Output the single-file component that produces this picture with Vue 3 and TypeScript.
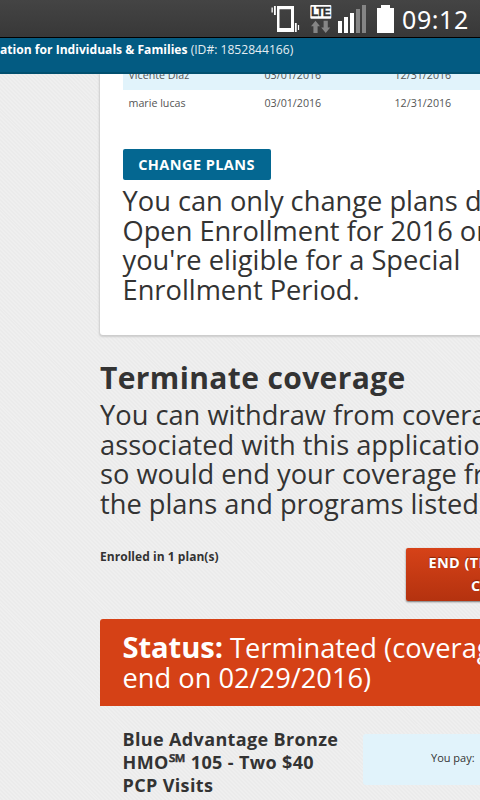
<script setup lang="ts">
interface Member {
  name: string
  start: string
  end: string
}

const members: Member[] = [
  { name: 'Vicente Diaz', start: '03/01/2016', end: '12/31/2016' },
  { name: 'marie lucas', start: '03/01/2016', end: '12/31/2016' },
]

const changeLines: string[] = [
  'You can only change plans during',
  'Open Enrollment for 2016 or if',
  "you're eligible for a Special",
  'Enrollment Period.',
]

const terminateLines: string[] = [
  'You can withdraw from coverage',
  'associated with this application',
  'so would end your coverage from',
  'the plans and programs listed',
]
</script>

<template>
  <div class="screen">
    <header class="phone-bar">
      <svg class="status-icons" width="131" height="37" viewBox="0 0 131 37">
        <g fill="#fff">
          <path d="M6 6h17v26H6zM8.5 9.3V28H20V9.3z" fill-rule="evenodd" />
          <path d="M3 6h1.8v9H3zM.5 7.5h1.3v5H.5zM23.9 23h1.8v9h-1.8zM26.9 25h1.2v5h-1.2z" />
          <rect x="39.3" y="5" width="21" height="13.7" rx="1" />
          <path d="M67 21h4v12h-4zM73 17h4v16h-4zM79 13h4v20h-4z" />
          <path d="M110 5h9v3h4v25h-17V8h4z" />
        </g>
        <path d="M85 9h4v24h-4zM91 5h4v28h-4z" fill="#858585" />
        <path d="M44.5 20.7l4.5 5.6h-2.4V33h-4.2v-6.7H40zM54.7 33l-4.5-5.6h2.4v-6.7h4.2v6.7h2.4z" fill="#858585" />
        <text x="49.3" y="16.2" text-anchor="middle" class="lte">LTE</text>
      </svg>
      <span class="clock">09:12</span>
    </header>

    <div class="app-bar">
      <span class="app-title"><b>ation for Individuals &amp; Families</b> (ID#: 1852844166)</span>
    </div>

    <main class="page">
      <section class="card">
        <div class="members">
          <div v-for="m in members" :key="m.name" class="member">
            <span>{{ m.name }}</span><span>{{ m.start }}</span><span>{{ m.end }}</span>
          </div>
        </div>
        <button class="change">CHANGE PLANS</button>
        <p class="copy">
          <span v-for="l in changeLines" :key="l">{{ l }}</span>
        </p>
      </section>

      <h2>Terminate coverage</h2>
      <p class="copy">
        <span v-for="l in terminateLines" :key="l">{{ l }}</span>
      </p>

      <div class="enrolled">
        <b>Enrolled in 1 plan(s)</b>
        <button class="end"><span>END (TERMINATE) ALL</span><span>COVERAGE</span></button>
      </div>

      <section class="plan">
        <div class="status">
          <div class="status-line"><b>Status:</b> Terminated (coverage will</div>
          <div class="status-line">end on 02/29/2016)</div>
        </div>
        <div class="plan-body">
          <h3>
            <span>Blue Advantage Bronze</span>
            <span>HMO<i class="mark">℠</i> 105 - Two $40</span>
            <span>PCP Visits</span>
          </h3>
          <div class="pay">You pay:</div>
        </div>
      </section>
    </main>
  </div>
</template>

<style>
body {
  margin: 0;
  overflow: hidden;
}
</style>

<style scoped>
.screen {
  width: 480px;
  height: 800px;
  overflow: hidden;
  display: flex;
  flex-direction: column;
  font-family: 'Open Sans', 'Noto Sans', sans-serif;
  color: #333;
  white-space: nowrap;
  background: repeating-linear-gradient(45deg, #efefef 0 1.4px, #ebebeb 1.4px 2.8px);
}
.phone-bar {
  flex: none;
  box-sizing: border-box;
  height: 38px;
  padding: 0 0 0 271px;
  display: flex;
  background: linear-gradient(#444, #383838);
  border-bottom: 1px solid #000;
}
.status-icons {
  flex: none;
}
.lte {
  font: bold 12px 'Liberation Sans', sans-serif;
  letter-spacing: -1px;
  stroke: #333;
  stroke-width: 0.3px;
  fill: #333;
}
.clock {
  font: 25px/39px 'Noto Sans', sans-serif;
  letter-spacing: 0.6px;
  color: #fff;
}
.app-bar {
  flex: none;
  box-sizing: border-box;
  height: 36px;
  background: #035b82;
  border-bottom: 2px solid #02506f;
  color: #e4edf2;
  font-size: 12.1px;
  line-height: 23px;
}
.app-title b {
  color: #fff;
}
.page {
  flex: 1;
  min-height: 0;
  overflow: hidden;
  padding-left: 100px;
}
p,
h2,
h3 {
  margin: 0;
}
button {
  border: 0;
  padding: 0;
  font-family: inherit;
  color: #fff;
  font-weight: 700;
}
.card {
  box-sizing: border-box;
  height: 261px;
  width: 420px;
  padding-left: 22.5px;
  background: #fff;
  border-radius: 0 0 3px 3px;
  box-shadow: 0 1px 2px 1px #ccc;
}
.members {
  overflow: hidden;
  height: 75px;
  display: flex;
  flex-direction: column;
}
.member {
  flex: none;
  display: grid;
  grid-template-columns: 136px 130px 140px;
  font-size: 10.7px;
  height: 26px;
  line-height: 26px;
  color: #555;
}
.member span {
  padding-left: 6px;
}
.member:first-child {
  height: 16px;
  line-height: 2px;
  background: #e1f3fb;
}
.change {
  display: block;
  width: 148px;
  height: 30.5px;
  border-radius: 2px;
  background: #046791;
  font-size: 14.5px;
  line-height: 31px;
  letter-spacing: 0.42px;
}
.copy {
  font-size: 27.25px;
  line-height: 29.6px;
}
.copy span,
h3 span,
.end span {
  display: block;
}
.card .copy {
  padding-top: 6.5px;
}
h2 {
  padding-top: 24px;
  height: 41px;
  font-size: 30px;
  line-height: 38px;
  letter-spacing: 0.37px;
}
.enrolled {
  display: flex;
  height: 101px;
  box-sizing: border-box;
  padding-top: 29.6px;
  font-size: 12px;
  letter-spacing: 0.04px;
}
.enrolled b {
  width: 306px;
  flex: none;
  line-height: 18px;
}
.end {
  flex: none;
  width: 210px;
  height: 53px;
  border-radius: 2px;
  background: linear-gradient(#d64218, #b4320f);
  box-shadow: 0 1px 2px #777;
  font-size: 14.5px;
  line-height: 23px;
  letter-spacing: 0.42px;
  text-shadow: 0 -1px 1px #852509;
}
.status {
  box-sizing: border-box;
  height: 86.3px;
  width: 420px;
  padding: 12.4px 0 0 22.5px;
  background: #d54116;
  border-radius: 3px 0 0;
  color: #fff;
  font-size: 27.25px;
  line-height: 30.5px;
}
.status b {
  font-size: 29.2px;
  line-height: 30px;
  letter-spacing: -0.1px;
}
.plan-body {
  display: flex;
  align-items: flex-start;
  padding: 22px 0 0 22.5px;
}
h3 {
  flex: none;
  width: 240.5px;
  font-size: 18px;
  line-height: 22.7px;
  letter-spacing: 0.36px;
}
.mark {
  font-style: normal;
  font-size: 22px;
  line-height: 1;
  letter-spacing: 0;
  vertical-align: -1px;
  -webkit-text-stroke: 0.5px #333;
}
.pay {
  flex: none;
  box-sizing: border-box;
  width: 140px;
  height: 51px;
  margin-top: 6.5px;
  padding-left: 68px;
  background: #e1f3fb;
  border-radius: 3px 0 0 3px;
  font-size: 11px;
  line-height: 48px;
}
</style>
